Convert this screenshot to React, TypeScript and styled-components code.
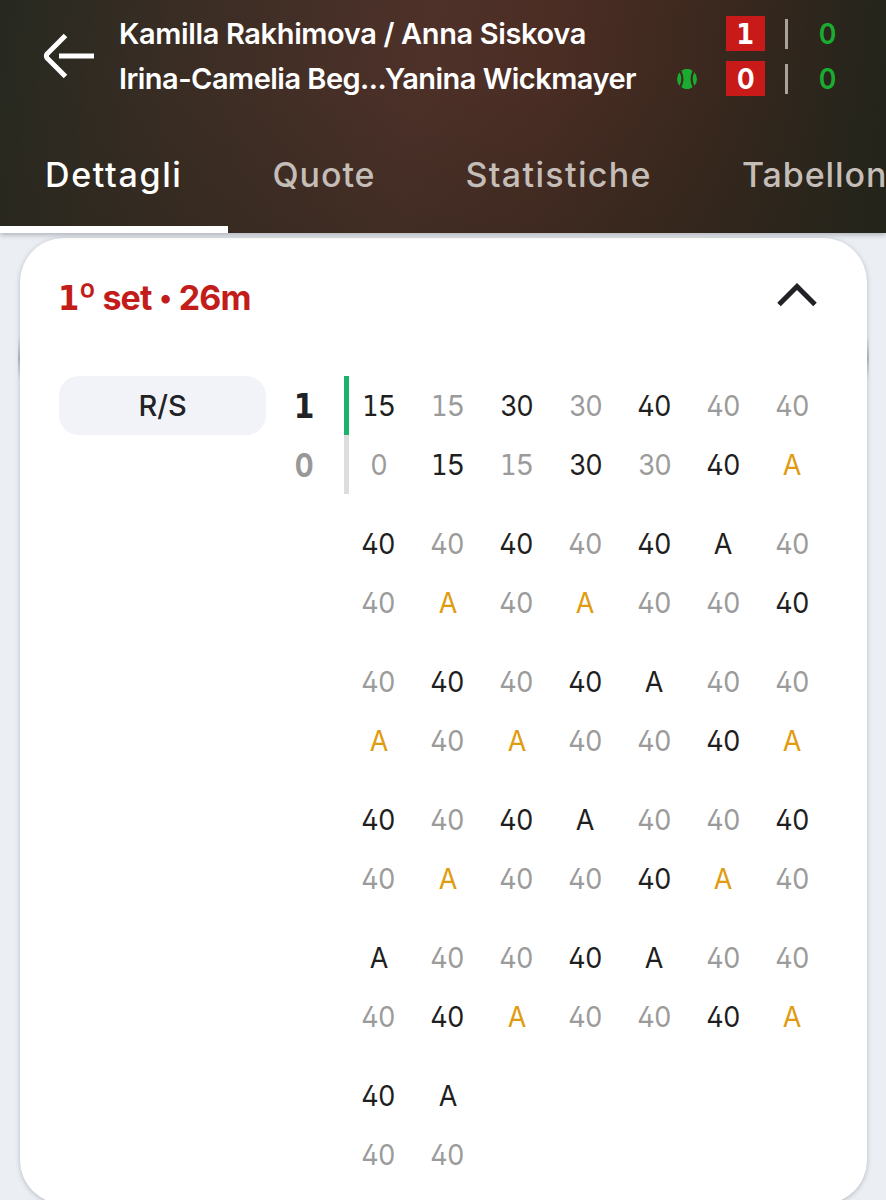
import React from "react";
import styled, { createGlobalStyle } from "styled-components";

const GlobalStyle = createGlobalStyle`
  * { box-sizing: border-box; }
  body {
    margin: 0;
    background: #ebeff4;
    font-family: Inter, "Liberation Sans", sans-serif;
    color: #222226;
  }
`;

const Screen = styled.div`
  width: 886px;
  height: 1200px;
  overflow: hidden;
  background: #ebeff4;
`;

const Header = styled.header`
  position: relative;
  z-index: 1;
  height: 233px;
  display: flex;
  flex-direction: column;
  background:
    linear-gradient(180deg, rgba(40, 36, 26, 0) 30%, rgba(40, 36, 26, 0.34) 100%),
    linear-gradient(98deg, #262920 0%, #3a2d24 20%, #4e3129 47%, #4b2d24 61%, #3b281e 78%, #20241b 100%);
  box-shadow: 0 2px 5px rgba(40, 40, 50, 0.3);
`;

const MatchBar = styled.div`
  display: flex;
  height: 125px;
  padding: 11px 0 0 43px;
`;

const BackButton = styled.button`
  width: 76px;
  height: 90px;
  padding: 0;
  border: 0;
  background: none;
  display: flex;
  align-items: center;
  svg { display: block; }
`;

const Teams = styled.div`
  flex: 1;
`;

const Team = styled.div`
  display: flex;
  align-items: center;
  height: 45px;
`;

const Name = styled.div<{ $spacing: number }>`
  width: 557px;
  font-size: 29px;
  font-weight: 600;
  letter-spacing: ${(p) => p.$spacing}px;
  white-space: nowrap;
  color: #fff;
`;

const Serve = styled.div`
  width: 50px;
  padding-left: 1px;
  svg { display: block; }
`;

const SetScore = styled.div`
  width: 39px;
  height: 35px;
  background: #c91a1a;
  color: #fff;
  font-size: 29px;
  font-weight: 700;
  display: flex;
  align-items: center;
  justify-content: center;
`;

const Divider = styled.div`
  width: 2.5px;
  height: 30px;
  margin-left: 20px;
  background: #aaa29c;
`;

const GameScore = styled.div`
  width: 80px;
  text-align: center;
  color: #1aac30;
  font-size: 29px;
  font-weight: 600;
`;

const Tabs = styled.nav`
  display: flex;
  height: 108px;
  overflow: hidden;
`;

const Tab = styled.div<{ $active?: boolean; $spacing: number }>`
  flex: none;
  height: 108px;
  padding: 29px 45px 0;
  font-size: 34px;
  line-height: 41px;
  font-weight: 500;
  letter-spacing: ${(p) => p.$spacing}px;
  white-space: nowrap;
  color: ${(p) => (p.$active ? "#fff" : "#c5bdb8")};
  border-bottom: 7px solid ${(p) => (p.$active ? "#fff" : "transparent")};
`;

const Card = styled.section`
  position: relative;
  margin: 5px 19px 0 20px;
  height: 966px;
  padding: 0 39px;
  border-radius: 44px;
  background: #fff;
  box-shadow: 0 1px 5px rgba(40, 45, 60, 0.28);

  &::before,
  &::after {
    content: "";
    position: absolute;
    top: 98px;
    width: 2px;
    height: 44px;
    background: linear-gradient(rgba(90, 90, 100, 0), rgba(90, 90, 100, 0.35), rgba(90, 90, 100, 0));
  }
  &::before { left: -2px; }
  &::after { right: -2px; }
`;

const CardHead = styled.div`
  display: flex;
  align-items: center;
  justify-content: space-between;
  height: 118px;
  padding: 0 11px 4px 0;
`;

const SetTitle = styled.h2`
  margin: 4px 0 0 -1px;
  font-size: 34px;
  font-weight: 700;
  letter-spacing: -0.9px;
  color: #c21d1b;
`;

const Ordinal = styled.span`
  font-size: 37px;
  line-height: 1;
`;

const Bullet = styled.span`
  font-size: 27px;
  margin: 0 0.5px;
  vertical-align: 3px;
`;

const CardBody = styled.div`
  display: flex;
  align-items: flex-start;
  padding-top: 20px;
`;

const ServeChip = styled.div`
  width: 207px;
  height: 59px;
  border-radius: 20px;
  background: #f2f3f8;
  display: flex;
  align-items: center;
  justify-content: center;
  font-size: 29px;
  font-weight: 500;
`;

const Games = styled.div`
  width: 78px;
`;

const GameCount = styled.div<{ $lost?: boolean }>`
  height: 59px;
  padding-right: 2px;
  display: flex;
  align-items: center;
  justify-content: center;
  font-size: 33px;
  font-weight: 700;
  color: ${(p) => (p.$lost ? "#989898" : "#222226")};
`;

const WinnerBar = styled.div`
  width: 5px;
  height: 118px;
  margin-right: -5px;
  background: linear-gradient(#1db26b 50%, #dddddd 50%);
`;

const Points = styled.div`
  flex: 1;
  padding-right: 1.5px;
  display: flex;
  flex-direction: column;
  gap: 20px;
`;

const PointGroup = styled.div`
  display: grid;
  grid-template-columns: repeat(7, 1fr);
  grid-auto-rows: 59px;
`;

type Tone = "won" | "lost" | "break";
const tones: Record<Tone, string> = { won: "#1f1f22", lost: "#9b9b9b", break: "#df9c10" };

const Point = styled.div<{ $tone: Tone }>`
  display: flex;
  align-items: center;
  justify-content: center;
  font-size: 29px;
  font-weight: 400;
  letter-spacing: -0.5px;
  font-feature-settings: "cv02" 1;
  color: ${(p) => tones[p.$tone]};
`;

const Figure = styled.span<{ $scale: number }>`
  display: inline-block;
  transform: scaleX(${(p) => p.$scale});
`;

const SlabOne = styled.span`
  font-family: "DejaVu Sans Condensed", "DejaVu Sans", sans-serif;
  font-stretch: condensed;
`;

function Digits({ children, scale = 0.93 }: { children: string; scale?: number }) {
  return (
    <Figure $scale={scale}>
      {children.split("").map((c, i) => (c === "1" ? <SlabOne key={i}>1</SlabOne> : c))}
    </Figure>
  );
}

// "+" marks the side that won the point, "!" a break point.
const groups: [string, string][] = [
  ["+15 15 +30 30 +40 40 40", "0 +15 15 +30 30 +40 !A"],
  ["+40 40 +40 40 +40 +A 40", "40 !A 40 !A 40 40 +40"],
  ["40 +40 40 +40 +A 40 40", "!A 40 !A 40 40 +40 !A"],
  ["+40 40 +40 +A 40 40 +40", "40 !A 40 40 +40 !A 40"],
  ["+A 40 40 +40 +A 40 40", "40 +40 !A 40 40 +40 !A"],
  ["+40 +A", "40 40"],
];

function PointRow({ row }: { row: string }) {
  const cells = row.split(" ");
  while (cells.length < 7) cells.push("");
  return (
    <>
      {cells.map((cell, i) => {
        const tone: Tone = cell[0] === "+" ? "won" : cell[0] === "!" ? "break" : "lost";
        const text = cell.replace(/[+!]/, "");
        return (
          <Point key={i} $tone={tone}>
            <Digits scale={text === "15" ? 0.98 : 0.93}>{text}</Digits>
          </Point>
        );
      })}
    </>
  );
}

const BackIcon = () => (
  <svg width="52" height="46" viewBox="0 0 52 46" fill="none" stroke="#fff" strokeWidth="5">
    <path d="M22.5 2.5 4.2 20.8Q2.6 23 4.2 25.2L22.5 43.5M16 23H51" />
  </svg>
);

const BallIcon = () => (
  <svg width="20" height="20" viewBox="0 0 20 20" fill="#1aac30">
    <path d="M4.4 1.7A10 10 0 0 1 15.6 1.7Q11.4 10 15.6 18.3A10 10 0 0 1 4.4 18.3Q8.6 10 4.4 1.7Z" />
    <path d="M2.6 3.3A10 10 0 0 0 2.6 16.7Q6 10 2.6 3.3ZM17.4 3.3A10 10 0 0 1 17.4 16.7Q14 10 17.4 3.3Z" />
  </svg>
);

const ChevronUp = () => (
  <svg width="40" height="24" viewBox="0 0 40 24" fill="none" stroke="#222226" strokeWidth="5">
    <path d="M2 21.5 20 3.5 38 21.5" />
  </svg>
);

export default function App() {
  return (
    <Screen>
      <GlobalStyle />
      <Header>
        <MatchBar>
          <BackButton aria-label="Indietro"><BackIcon /></BackButton>
          <Teams>
            <Team>
              <Name $spacing={-0.37}>Kamilla Rakhimova / Anna Siskova</Name>
              <Serve />
              <SetScore><Digits scale={0.98}>1</Digits></SetScore>
              <Divider />
              <GameScore><Digits scale={0.92}>0</Digits></GameScore>
            </Team>
            <Team>
              <Name $spacing={-0.53}>Irina-Camelia Beg...Yanina Wickmayer</Name>
              <Serve><BallIcon /></Serve>
              <SetScore><Digits scale={0.9}>0</Digits></SetScore>
              <Divider />
              <GameScore><Digits scale={0.92}>0</Digits></GameScore>
            </Team>
          </Teams>
        </MatchBar>
        <Tabs>
          <Tab $active $spacing={1.65}>Dettagli</Tab>
          <Tab $spacing={0.9}>Quote</Tab>
          <Tab $spacing={1.35}>Statistiche</Tab>
          <Tab $spacing={0.9}>Tabellone</Tab>
        </Tabs>
      </Header>
      <Card>
        <CardHead>
          <SetTitle><SlabOne>1</SlabOne><Ordinal>º</Ordinal> set <Bullet>•</Bullet> 26m</SetTitle>
          <ChevronUp />
        </CardHead>
        <CardBody>
          <ServeChip>R/S</ServeChip>
          <Games>
            <GameCount><Digits scale={1}>1</Digits></GameCount>
            <GameCount $lost><Digits scale={0.85}>0</Digits></GameCount>
          </Games>
          <WinnerBar />
          <Points>
            {groups.map(([top, bottom], i) => (
              <PointGroup key={i}>
                <PointRow row={top} />
                <PointRow row={bottom} />
              </PointGroup>
            ))}
          </Points>
        </CardBody>
      </Card>
    </Screen>
  );
}
